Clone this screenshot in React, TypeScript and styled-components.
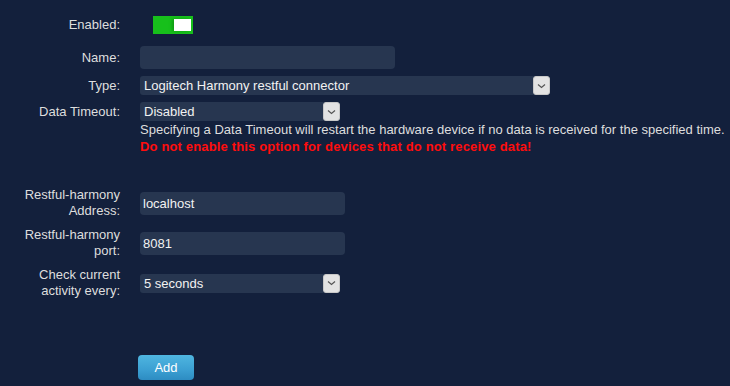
import styled, { createGlobalStyle } from 'styled-components';

const GlobalStyle = createGlobalStyle`
  html, body {
    margin: 0;
    padding: 0;
    background: #13203c;
  }
  body {
    font-family: 'Liberation Sans', Arial, sans-serif;
    font-size: 13px;
    color: #dedede;
  }
`;

const Page = styled.div`
  width: 730px;
  height: 386px;
  padding-top: 16px;
  box-sizing: border-box;
  overflow: hidden;
  display: flex;
  flex-direction: column;
`;

const Row = styled.div<{ $top?: number; $align?: string }>`
  display: grid;
  grid-template-columns: 120px 1fr;
  column-gap: 20px;
  align-items: ${(p) => p.$align || 'center'};
  margin-top: ${(p) => p.$top || 0}px;
`;

const Label = styled.label<{ $lh?: number }>`
  text-align: right;
  line-height: ${(p) => p.$lh || 16}px;
`;

const Field = styled.div`
  display: flex;
  flex-direction: column;
  align-items: flex-start;
`;

const Toggle = styled.div`
  width: 40px;
  height: 18px;
  margin-left: 13px;
  background: #17c01b;
  position: relative;
`;

const Knob = styled.span`
  position: absolute;
  top: 3px;
  right: 2px;
  width: 17px;
  height: 12px;
  background: #fff;
  box-shadow: -2px 0 3px rgba(0, 80, 0, 0.35);
`;

const Input = styled.input<{ $w: number }>`
  width: ${(p) => p.$w}px;
  height: 23px;
  box-sizing: border-box;
  background: #273650;
  border: none;
  border-radius: 4px;
  padding: 0 3px;
  color: #f2f2f2;
  font-family: 'Liberation Sans', Arial, sans-serif;
  font-size: 13px;
  outline: none;
`;

const Select = styled.div<{ $w: number }>`
  width: ${(p) => p.$w}px;
  height: 19px;
  display: flex;
  align-items: center;
  background: #273650;
  border-radius: 3px;
  color: #f2f2f2;
`;

const SelectText = styled.span`
  flex: 1;
  padding-left: 4px;
  line-height: 19px;
`;

const Arrow = styled.span`
  width: 17px;
  height: 19px;
  box-sizing: border-box;
  background: #e3e3e3;
  border: 1px solid #c8c8c8;
  border-radius: 3px;
  display: flex;
  align-items: center;
  justify-content: center;
`;

const Help = styled.div`
  line-height: 17px;
  white-space: nowrap;
  color: #dedede;
`;

const Warn = styled.div`
  line-height: 17px;
  white-space: nowrap;
  color: #ff0d0d;
  font-weight: bold;
  letter-spacing: 0.15px;
`;

const ButtonRow = styled.div`
  margin-top: 56px;
  padding-left: 138px;
`;

const AddButton = styled.button`
  width: 56px;
  height: 25px;
  border: none;
  border-radius: 4px;
  background: linear-gradient(#4fb6e0, #3b9fd2 60%, #2d8cc2);
  color: #fff;
  font-family: 'Liberation Sans', Arial, sans-serif;
  font-size: 13px;
  padding: 0;
`;

function Chevron() {
  return (
    <svg width="9" height="6" viewBox="0 0 9 6">
      <path d="M1 1.5 L4.5 4.5 L8 1.5" fill="none" stroke="#555" strokeWidth="1.2" />
    </svg>
  );
}

function Dropdown({ value, width }: { value: string; width: number }) {
  return (
    <Select $w={width}>
      <SelectText>{value}</SelectText>
      <Arrow>
        <Chevron />
      </Arrow>
    </Select>
  );
}

export default function App() {
  return (
    <>
      <GlobalStyle />
      <Page>
        <Row>
          <Label $lh={18}>Enabled:</Label>
          <Toggle>
            <Knob />
          </Toggle>
        </Row>
        <Row $top={12}>
          <Label>Name:</Label>
          <Input $w={255} defaultValue="" />
        </Row>
        <Row $top={7}>
          <Label $lh={19}>Type:</Label>
          <Dropdown value="Logitech Harmony restful connector" width={410} />
        </Row>
        <Row $top={7} $align="start">
          <Label $lh={19}>Data Timeout:</Label>
          <Field>
            <Dropdown value="Disabled" width={200} />
            <Help>Specifying a Data Timeout will restart the hardware device if no data is received for the specified time.</Help>
            <Warn>Do not enable this option for devices that do not receive data!</Warn>
          </Field>
        </Row>
        <Row $top={32}>
          <Label>
            Restful-harmony
            <br />
            Address:
          </Label>
          <Input $w={205} defaultValue="localhost" />
        </Row>
        <Row $top={8}>
          <Label>
            Restful-harmony
            <br />
            port:
          </Label>
          <Input $w={205} defaultValue="8081" />
        </Row>
        <Row $top={8}>
          <Label>
            Check current
            <br />
            activity every:
          </Label>
          <Dropdown value="5 seconds" width={200} />
        </Row>
        <ButtonRow>
          <AddButton>Add</AddButton>
        </ButtonRow>
      </Page>
    </>
  );
}
